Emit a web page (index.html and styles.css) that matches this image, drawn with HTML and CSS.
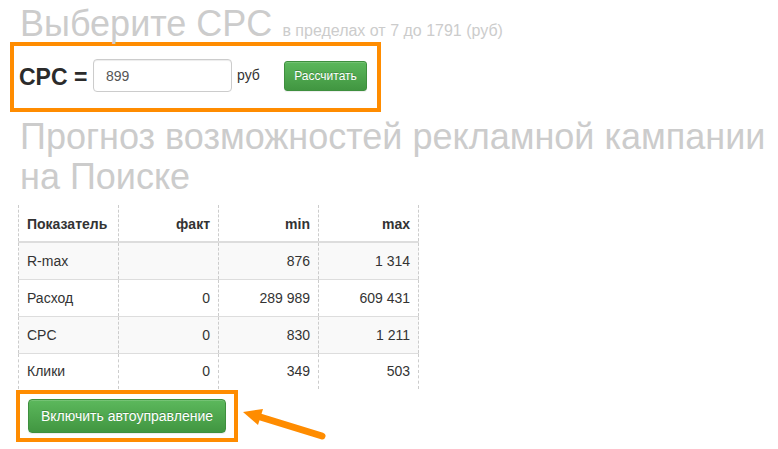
FILE: index.html
```html
<!DOCTYPE html>
<html lang="ru">
<head>
<meta charset="utf-8">
<link rel="stylesheet" href="styles.css">
</head>
<body>
<div class="page">
  <h1 class="title">Выберите CPC <small class="title-note">в пределах от 7 до 1791 (руб)</small></h1>
  <div class="mark mark-form">
    <div class="form-row">
      <span class="cpc-label">CPC =</span>
      <input class="cpc-input" type="text" value="899">
      <span class="unit">руб</span>
      <button class="btn btn-sm">Рассчитать</button>
    </div>
  </div>
  <h2 class="title title-forecast">Прогноз возможностей рекламной кампании на Поиске</h2>
  <table class="forecast">
    <thead>
      <tr><th class="left">Показатель</th><th>факт</th><th>min</th><th>max</th></tr>
    </thead>
    <tbody>
      <tr class="odd"><td class="left">R-max</td><td></td><td>876</td><td>1 314</td></tr>
      <tr><td class="left">Расход</td><td>0</td><td>289 989</td><td>609 431</td></tr>
      <tr class="odd"><td class="left">CPC</td><td>0</td><td>830</td><td>1 211</td></tr>
      <tr class="last"><td class="left">Клики</td><td>0</td><td>349</td><td>503</td></tr>
    </tbody>
  </table>
  <div class="mark mark-auto">
    <button class="btn btn-lg">Включить автоуправление</button>
  </div>
  <svg class="arrow" width="778" height="449" viewBox="0 0 778 449">
    <line x1="322" y1="436" x2="257" y2="416" stroke="#ff8c00" stroke-width="7" stroke-linecap="round"/>
    <polygon points="243,412 263,409 258,425" fill="#ff8c00"/>
  </svg>
</div>
</body>
</html>
```

FILE: styles.css
```css
html, body {
  margin: 0;
  padding: 0;
  background: #fff;
}
body {
  font-family: "Liberation Sans", Arial, Helvetica, sans-serif;
  color: #333;
}
.page {
  position: relative;
  width: 778px;
  height: 449px;
  overflow: hidden;
}
.title {
  margin: 6px 0 0 20px;
  font-size: 36px;
  font-weight: normal;
  line-height: 36px;
  color: #cccccc;
  white-space: nowrap;
}
.title-note {
  font-size: 16px;
  line-height: 0;
  color: #cccccc;
}
.mark {
  border: 4px solid #ff8c00;
  box-sizing: border-box;
}
.mark-form {
  margin-left: 10px;
  width: 371px;
  height: 70px;
  padding: 13px 0 0 5px;
}
.form-row {
  display: flex;
  align-items: center;
  height: 33px;
}
.cpc-label {
  font-size: 23px;
  font-weight: bold;
  color: #2b2b2b;
  margin-top: 4px;
  width: 74px;
}
.cpc-input {
  width: 139px;
  height: 33px;
  box-sizing: border-box;
  border: 1px solid #ccc;
  border-radius: 4px;
  padding: 0 12px;
  font: 14px "Liberation Sans", Arial, sans-serif;
  color: #555;
  box-shadow: inset 0 1px 1px rgba(0,0,0,.075);
  margin: 0;
}
.unit {
  font-size: 14px;
  color: #333;
  margin-left: 5px;
  margin-top: -2px;
  width: 47px;
}
.btn {
  font-family: "Liberation Sans", Arial, sans-serif;
  color: #fff;
  border: 1px solid #3e8f3e;
  background: linear-gradient(#5cb85c, #419641);
  text-shadow: 0 -1px 0 rgba(0,0,0,.2);
  box-shadow: inset 0 1px 0 rgba(255,255,255,.15), 0 1px 1px rgba(0,0,0,.075);
  box-sizing: border-box;
  padding: 0;
  cursor: pointer;
}
.btn-sm {
  width: 83px;
  height: 30px;
  font-size: 12px;
  border-radius: 3px;
}
.title-forecast {
  margin-top: 5px;
  line-height: 40px;
  width: 750px;
  white-space: normal;
}
.forecast {
  margin: 8px 0 0 18px;
  border-collapse: collapse;
  font-size: 14px;
  color: #333;
}
.forecast th, .forecast td {
  width: 100px;
  box-sizing: border-box;
  padding: 0 8px;
  text-align: right;
  border-left: 1px dashed #ccc;
  border-right: 1px dashed #ccc;
  vertical-align: middle;
}
.forecast th {
  height: 37px;
  font-size: 14px;
  font-weight: bold;
  border-bottom: 2px solid #ddd;
  padding-top: 2px;
}
.forecast td {
  height: 37px;
  border-top: 1px solid #ddd;
}
.forecast tr.last td {
  height: 36px;
}
.forecast .left {
  text-align: left;
}
.forecast tr.odd td {
  background: #f9f9f9;
}
.mark-auto {
  margin: 1px 0 0 16px;
  width: 222px;
  height: 52px;
  padding: 5px 0 0 8px;
}
.btn-lg {
  width: 198px;
  height: 34px;
  font-size: 14px;
  border-radius: 4px;
}
.arrow {
  position: absolute;
  left: 0;
  top: 0;
  pointer-events: none;
}
```
